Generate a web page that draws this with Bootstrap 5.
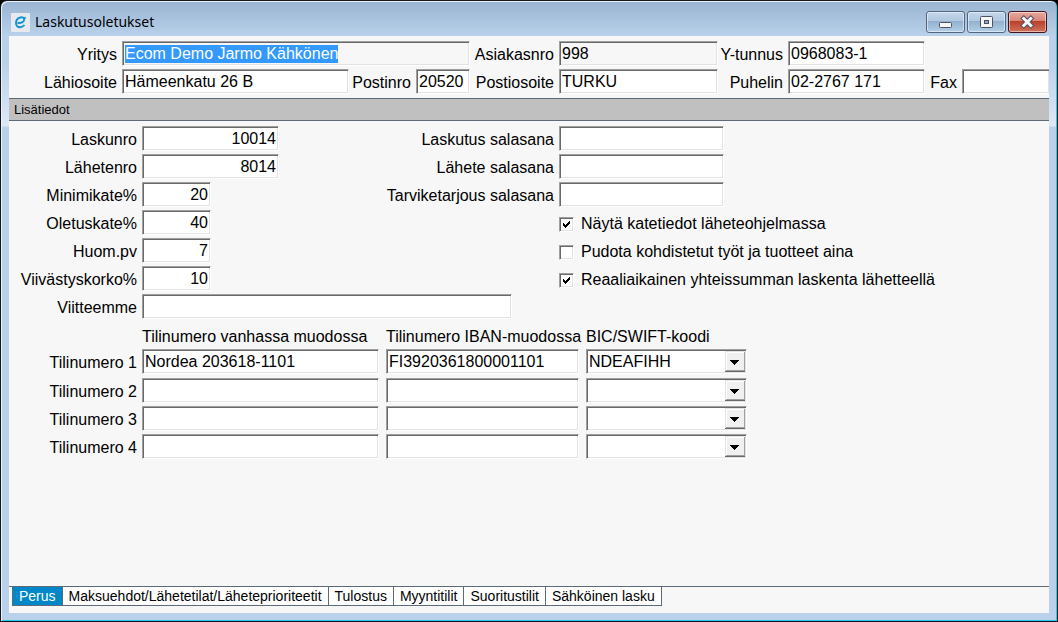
<!DOCTYPE html>
<html lang="fi">
<head>
<meta charset="utf-8">
<meta name="viewport" content="width=device-width, initial-scale=1">
<title>Laskutusoletukset</title>
<link href="https://cdn.jsdelivr.net/npm/bootstrap@5.3.0/dist/css/bootstrap.min.css" rel="stylesheet">
<style>
  body { font: 16px/28px "Liberation Sans", Arial, sans-serif; color: #000; background: #000; }

  /* window frame */
  .app-window {
    border: 1px solid #16161c; border-radius: 7px 7px 0 0;
    padding: 0 7px 8px;
    background: linear-gradient(#99b4d1, #b9d1ea 35px, #b9d1ea 60px, #dde8f5 125px, #b9d1ea 126px);
    box-shadow: inset 1px 1px 0 #eaf2fb, inset -1px -1px 0 #22cbe6;
  }
  .title-bar { height: 35px; padding: 7px 3px 0; }
  .title-bar h1 { font: 14px/20px "Noto Sans", sans-serif; margin-left: 5px; }
  .caption-group { gap: 2px; }
  .caption-btn {
    width: 39px; height: 22px; border: 1px solid #53657f; border-radius: 3px;
    background: linear-gradient(#c3d6ea, #b0c8e0 45%, #92b0ce 46%, #b3cfe8);
    box-shadow: inset 0 0 0 1px #ffffff80;
  }
  .caption-close { border-color: #43131b; background: linear-gradient(#e8a99e, #d98578 45%, #b8402a 46%, #d2705a); }
  .client { background: #f7f7f7; margin: 0 1px; }

  /* forms */
  .head-grid { display: grid; grid-template-columns: 113px 227px 67px 54px 89px 159px 70px 137px 37px 1fr; padding-top: 5px; grid-auto-rows: 28px; }
  .span-wide { grid-column: span 3; }
  .detail-form { padding-top: 5px; }
  .form-line { display: grid; grid-template-columns: 133px 1fr; height: 28px; }
  .pass-line { display: grid; grid-template-columns: 280px 165px; height: 28px; }
  .num-area { width: 270px; }
  .lbl { text-align: right; padding-right: 5px; white-space: nowrap; }
  .fld {
    display: block; width: 100%; min-width: 0; height: 25px; padding: 1px 2px 0;
    border: 1px solid; border-color: #a0a0a0 #fff #fff #a0a0a0; border-radius: 0;
    box-shadow: inset 1px 1px 0 #696969, inset -1px -1px 0 #e3e3e3;
    background-color: #fff; color: #000; line-height: 20px; outline: 0; appearance: none;
  }
  .fld-gray { background-color: #f7f7f7; }
  .fld-short { width: 69px; }
  .fld-ref { width: 370px; }
  .fld-cut { border-right: 0; }
  .fld::selection { background: #3399ff; color: #fff; }
  select.fld {
    background: #fff url("data:image/svg+xml,%3Csvg xmlns='http://www.w3.org/2000/svg' width='21' height='21' shape-rendering='crispEdges'%3E%3Cpath fill='%23696969' d='M0 0h21v21H0z'/%3E%3Cpath fill='%23e3e3e3' d='M0 0h20v20H0z'/%3E%3Cpath fill='%23a0a0a0' d='M1 1h19v19H1z'/%3E%3Cpath fill='%23fff' d='M1 1h18v18H1z'/%3E%3Cpath fill='%23f0f0f0' d='M2 2h17v17H2z'/%3E%3Cpath d='M5 9h9v1H5zM6 10h7v1H6zM7 11h5v1H7zM8 12h3v1H8zM9 13h1v1H9z'/%3E%3C/svg%3E") no-repeat right 0 top 1px;
  }
  .section-bar { height: 23px; font-size: 13px; line-height: 21px; padding-left: 5px; background: #c0c0c0; border: solid #5c6b77; border-width: 1px 0; margin-top: 1px; }
  .tick-line { height: 28px; padding-left: 280px; white-space: nowrap; }
  .tick {
    appearance: none; width: 15px; height: 15px; margin: 0 7px 0 0;
    border: 1px solid; border-color: #a0a0a0 #fff #fff #a0a0a0; background: #fff;
    box-shadow: inset 1px 1px 0 #696969, inset -1px -1px 0 #e3e3e3;
  }
  .tick:checked { background: #fff url("data:image/svg+xml,%3Csvg xmlns='http://www.w3.org/2000/svg' width='13' height='13' shape-rendering='crispEdges'%3E%3Cpath d='M3 5h1v3H3zM4 6h1v3H4zM5 7h1v3H5zM6 6h1v3H6zM7 5h1v3H7zM8 4h1v3H8zM9 3h1v3H9z'/%3E%3C/svg%3E") no-repeat; }
  .account-grid { display: grid; grid-template-columns: 126px 237px 193px 161px; column-gap: 7px; grid-template-rows: 27px 29px; grid-auto-rows: 28px; }
  .account-grid > .lbl { margin-right: -7px; }
  .account-grid > span { line-height: 30px; white-space: nowrap; }

  /* page tabs */
  .page-tabs { border-top: 1px solid #5c6b77; padding: 0 3px 7px; }
  .page-tabs button {
    height: 19px; padding: 0 6px; border: solid #5c6b77; border-width: 0 1px 1px 0;
    background: #fff; color: #000; font-size: 14px; line-height: 18px; white-space: nowrap;
  }
  .page-tabs button.active { background: #0087c8; color: #fff; border-left-width: 1px; }
</style>
</head>
<body>
<div class="app-window min-vh-100 d-flex flex-column">
  <header class="title-bar d-flex align-items-center flex-shrink-0">
    <svg width="19" height="19" viewBox="0 0 19 19" aria-hidden="true">
      <rect width="19" height="19" rx="1" fill="#e6eaee"/>
      <path d="M6.500 9.800C10 10.600 13 9.200 13.200 6.500C13.300 4.500 11.500 4 9.500 4.500C6.500 5.200 5 7.500 5 10C5 12.800 6.800 14.300 9.200 14.200C11 14.100 12.500 13.200 13.500 12M13 5.200L14.800 4.600" fill="none" stroke="#1594cc" stroke-width="1.900"/>
    </svg>
    <h1 class="mb-0">Laskutusoletukset</h1>
    <div class="caption-group ms-auto d-flex">
      <button class="caption-btn p-0 d-flex align-items-center justify-content-center" type="button" aria-label="Pienennä">
        <svg width="37" height="20"><rect x="12.500" y="10.500" width="12" height="5" rx="1" fill="#f6f6f6" stroke="#4a5263"/></svg>
      </button>
      <button class="caption-btn p-0 d-flex align-items-center justify-content-center" type="button" aria-label="Suurenna">
        <svg width="37" height="20"><rect x="12.500" y="4.500" width="12" height="11" rx="1" fill="#f6f6f6" stroke="#4a5263"/><rect x="16.500" y="8.500" width="4" height="3" fill="#8da9c6" stroke="#4a5263"/></svg>
      </button>
      <button class="caption-btn caption-close p-0 d-flex align-items-center justify-content-center" type="button" aria-label="Sulje">
        <svg width="37" height="20"><path d="M14.800 6.500l7 7M21.800 6.500l-7 7" stroke="#54505e" stroke-width="5" stroke-linecap="square"/><path d="M14.800 6.500l7 7M21.800 6.500l-7 7" stroke="#f6f6f6" stroke-width="3" stroke-linecap="square"/></svg>
      </button>
    </div>
  </header>

  <main class="client flex-grow-1 d-flex flex-column">
    <form class="head-grid">
      <label class="lbl" for="yritys">Yritys</label>
      <input class="fld fld-gray span-wide" id="yritys" value="Ecom Demo Jarmo Kähkönen">
      <label class="lbl" for="asnro">Asiakasnro</label>
      <input class="fld fld-gray" id="asnro" value="998">
      <label class="lbl" for="ytunnus">Y-tunnus</label>
      <input class="fld" id="ytunnus" value="0968083-1">
      <span></span><span></span>
      <label class="lbl" for="osoite">Lähiosoite</label>
      <input class="fld" id="osoite" value="Hämeenkatu 26 B">
      <label class="lbl" for="postinro">Postinro</label>
      <input class="fld" id="postinro" value="20520">
      <label class="lbl" for="postios">Postiosoite</label>
      <input class="fld" id="postios" value="TURKU">
      <label class="lbl" for="puhelin">Puhelin</label>
      <input class="fld" id="puhelin" value="02-2767 171">
      <label class="lbl" for="fax">Fax</label>
      <input class="fld fld-cut" id="fax">
    </form>

    <h2 class="section-bar mb-0">Lisätiedot</h2>

    <form class="detail-form flex-grow-1">
      <div class="d-flex">
        <div class="num-area">
          <div class="form-line"><label class="lbl" for="laskunro">Laskunro</label><input class="fld text-end" id="laskunro" value="10014"></div>
          <div class="form-line"><label class="lbl" for="lahetenro">Lähetenro</label><input class="fld text-end" id="lahetenro" value="8014"></div>
          <div class="form-line"><label class="lbl" for="minimi">Minimikate%</label><input class="fld fld-short text-end" id="minimi" value="20"></div>
          <div class="form-line"><label class="lbl" for="oletus">Oletuskate%</label><input class="fld fld-short text-end" id="oletus" value="40"></div>
          <div class="form-line"><label class="lbl" for="huom">Huom.pv</label><input class="fld fld-short text-end" id="huom" value="7"></div>
          <div class="form-line"><label class="lbl" for="viiv">Viivästyskorko%</label><input class="fld fld-short text-end" id="viiv" value="10"></div>
        </div>
        <div>
          <div class="pass-line"><label class="lbl" for="pw1">Laskutus salasana</label><input class="fld" id="pw1" type="password"></div>
          <div class="pass-line"><label class="lbl" for="pw2">Lähete salasana</label><input class="fld" id="pw2" type="password"></div>
          <div class="pass-line"><label class="lbl" for="pw3">Tarviketarjous salasana</label><input class="fld" id="pw3" type="password"></div>
          <div class="tick-line d-flex align-items-center"><input class="tick" type="checkbox" id="c1" checked><label for="c1">Näytä katetiedot läheteohjelmassa</label></div>
          <div class="tick-line d-flex align-items-center"><input class="tick" type="checkbox" id="c2"><label for="c2">Pudota kohdistetut työt ja tuotteet aina</label></div>
          <div class="tick-line d-flex align-items-center"><input class="tick" type="checkbox" id="c3" checked><label for="c3">Reaaliaikainen yhteissumman laskenta lähetteellä</label></div>
        </div>
      </div>
      <div class="form-line"><label class="lbl" for="viite">Viitteemme</label><input class="fld fld-ref" id="viite"></div>

      <div class="account-grid">
        <span></span><span id="h1">Tilinumero vanhassa muodossa</span><span id="h2">Tilinumero IBAN-muodossa</span><span id="h3">BIC/SWIFT-koodi</span>
        <label class="lbl" for="t1">Tilinumero 1</label><input class="fld" id="t1" value="Nordea 203618-1101"><input class="fld" aria-labelledby="h2" value="FI3920361800001101"><select class="fld" aria-labelledby="h3"><option>NDEAFIHH</option></select>
        <label class="lbl" for="t2">Tilinumero 2</label><input class="fld" id="t2"><input class="fld" aria-labelledby="h2"><select class="fld" aria-labelledby="h3"><option></option></select>
        <label class="lbl" for="t3">Tilinumero 3</label><input class="fld" id="t3"><input class="fld" aria-labelledby="h2"><select class="fld" aria-labelledby="h3"><option></option></select>
        <label class="lbl" for="t4">Tilinumero 4</label><input class="fld" id="t4"><input class="fld" aria-labelledby="h2"><select class="fld" aria-labelledby="h3"><option></option></select>
      </div>
    </form>

    <nav class="page-tabs d-flex">
      <button class="active" type="button">Perus</button>
      <button type="button">Maksuehdot/Lähetetilat/Läheteprioriteetit</button>
      <button type="button">Tulostus</button>
      <button type="button">Myyntitilit</button>
      <button type="button">Suoritustilit</button>
      <button type="button">Sähköinen lasku</button>
    </nav>
  </main>
</div>
<script src="https://cdn.jsdelivr.net/npm/bootstrap@5.3.0/dist/js/bootstrap.bundle.min.js"></script>
<script>
  const company = document.getElementById('yritys');
  company.focus();
  company.select();
</script>
</body>
</html>
